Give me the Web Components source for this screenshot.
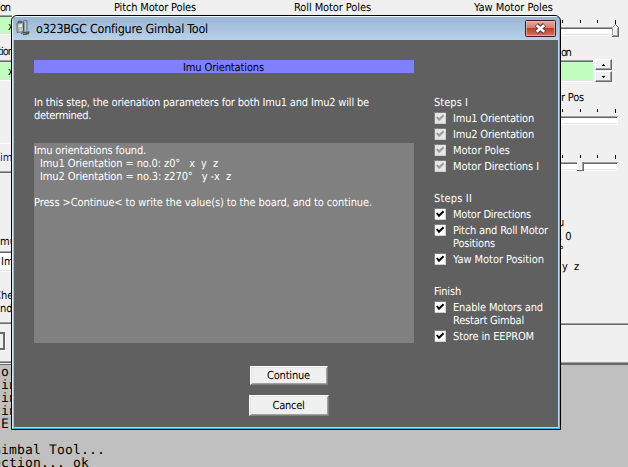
<!DOCTYPE html>
<html lang="en"><head><meta charset="utf-8"><title>o323BGC Configure Gimbal Tool</title>
<style>html,body{margin:0;padding:0;width:628px;height:467px;overflow:hidden;background:#f0f0f0}</style></head>
<body><gimbal-app></gimbal-app>
<script>
const define=(name,html,init)=>customElements.define(name,class extends HTMLElement{
  constructor(){super();const t=document.createElement('template');t.innerHTML=html;
    this.attachShadow({mode:'open'}).append(t.content.cloneNode(true));}
  connectedCallback(){if(init)init.call(this,this.shadowRoot);}
});

/* One line of text, tracked to the width in its w attribute. */
define('ui-text',`<style>:host{display:block;height:13px;line-height:13px;white-space:pre;overflow:visible}
span{display:inline-block;text-rendering:geometricPrecision}</style><span><slot></slot></span>`,function(r){
  const w=+this.getAttribute('w'),s=r.querySelector('span');if(!w)return;
  const n=this.textContent.length,cur=s.getBoundingClientRect().width;
  s.style.letterSpacing=((w-cur)/n)+'px';
});

define('check-item',`<style>:host{display:flex;gap:7px;padding-bottom:3px}
svg{width:12px;height:12px;flex:none}
:host([disabled]) .box{fill:#e6e6e6}:host([disabled]) .tick{stroke:#999}</style>
<svg viewBox="0 0 12 12" shape-rendering="crispEdges"><path fill="#fff" d="M0 0h12v12H0z"/><path fill="#808080" d="M0 0h12v1H1v11H0z"/><path class="box" fill="#fff" d="M1 1h10v10H1z"/><path fill="#d4d0c8" d="M11 1h1v11H1v-1h10z"/>
<path class="tick" shape-rendering="auto" d="M2.8 5l2.2 2.8 4.5-4.5" fill="none" stroke="#000" stroke-width="2"/></svg><div><slot></slot></div>`);

define('check-group',`<style>:host{display:block;margin-bottom:16px}header{height:16px}</style><header><slot name="title"></slot></header><slot></slot>`);

define('push-button',`<style>:host{display:flex;box-sizing:border-box;align-items:center;justify-content:center;background:#f0f0f0;color:#000;border:1px solid;border-color:#fff #808080 #808080 #fff;box-shadow:inset 1px 1px #e3e3e3,inset -1px -1px #a0a0a0}</style><slot></slot>`);

define('track-bar',`<style>:host{display:block;height:20px;width:67px}svg{display:block;overflow:visible}g{display:none}:host([thumb=end]) .end,:host([thumb=mid]) .mid{display:inline}</style>
<svg width="67" height="20" shape-rendering="crispEdges"><path fill="#000" d="M1 0h1v3H1zM19 0h1v3h-1zM36 0h1v3h-1zM54 0h1v4h-1z"/>
<path fill="#fff" d="M0 8h57v8H0z"/><path fill="#a0a0a0" d="M0 7h57v1H0z"/><path fill="#696969" d="M0 8h56v1H0z"/><path fill="#e3e3e3" d="M0 14h56v1H0z"/>
<g class="end"><path fill="#f0f0f0" d="M51 8l3-3 3 3v9h-6z"/><path fill="#fff" d="M51 8h1v8h-1z"/><path fill="#696969" d="M54 4h1v1h-1zM55 5h1v1h-1zM56 6h1v1h-1zM57 7h1v10h-7v-1h6z"/><path fill="#a0a0a0" d="M51 7h1v8h-1zM52 6h1v1h-1zM53 5h1v1h-1zM56 8h1v8h-1zM52 15h5v1h-5z"/></g>
<g class="mid"><path fill="#f0f0f0" d="M16 7l3-3 3 3v9h-6z"/><path fill="#fff" d="M16 7h1v8h-1zM17 6h1v1h-1z"/><path fill="#696969" d="M22 7h1v9h-7v-1h6z"/><path fill="#a0a0a0" d="M21 7h1v8h-1z"/></g></svg>`);

define('edit-field',`<style>:host{display:block;box-sizing:border-box;overflow:hidden;background:#c0ffc0;border-top:1px solid #a0a0a0;border-bottom:1px solid #fff;box-shadow:inset 0 1px #696969,inset 0 -1px #e3e3e3}</style><slot></slot>`);

define('spin-buttons',`<style>:host{display:grid;gap:1px;width:17px}div{height:11px;box-sizing:border-box;background:#f0f0f0;border:1px solid;border-color:#fff #696969 #696969 #fff;box-shadow:inset -1px -1px #a0a0a0;display:grid;place-items:center}svg{display:block}</style>
<div><svg width="3" height="2" shape-rendering="crispEdges"><path d="M1 0h1v1h1v1H0V1h1z"/></svg></div><div><svg width="3" height="2" shape-rendering="crispEdges"><path d="M0 0h3v1H2v1H1V1H0z"/></svg></div>`);

define('close-button',`<style>:host{display:block;width:31px;height:17px}svg{display:block}</style>
<svg width="31" height="17"><defs><linearGradient id="g" x2="0" y2="1"><stop stop-color="#e6aaa0"/><stop offset=".45" stop-color="#d28273"/><stop offset=".5" stop-color="#bb402c"/><stop offset="1" stop-color="#d37b64"/></linearGradient></defs>
<rect x=".5" y=".5" width="30" height="16" rx="1" fill="url(#g)" stroke="#431a25"/><rect x="1.5" y="1.5" width="28" height="14" fill="none" stroke="#f0bdb2" stroke-opacity=".7"/>
<path d="M11.4 4.8l8 7.4M19.4 4.8l-8 7.4" stroke="#593b43" stroke-width="4.6"/><path d="M11.6 5.2l7.6 6.6M19.2 5.2l-7.6 6.6" stroke="#fff" stroke-width="2.5" fill="none"/></svg>`);

define('tool-icon',`<style>:host{display:block;width:16px;height:17px}svg{display:block}</style>
<svg width="16" height="17"><path d="M7 5V2.5Q9 .2 11 2v11" fill="none" stroke="#6b777c" stroke-width="1.1"/><path d="M1.5 2.5l1.5-1 3 .5v2L2 4z" fill="#5b625d"/><path d="M1 4l7-.8v9.3l-7 1z" fill="#a3aba5" stroke="#5d6560" stroke-width=".8"/><path d="M2.5 5.5l3.5-.4v3l-3.5.4z" fill="#e2e8e3"/><path d="M3 10h4M3 11.8h3" stroke="#d9dfd9"/><path d="M7.5 4v8" stroke="#4b524e"/><path d="M5 14.5q3-1.5 5.5-1l3-.5M7 15.5l6-1" stroke="#4e5553" fill="none" stroke-width="1.3"/><path d="M9.5 4v8" stroke="#c4d0d7"/></svg>`);

define('gimbal-dialog',`<style>
:host{box-sizing:border-box;width:550px;height:415px;border:1px solid #000;border-radius:6px 6px 0 0;background:#606060;color:#fff;overflow:hidden;display:grid;grid-template-rows:24px 1fr}
.bar{display:flex;background:linear-gradient(#eaf4fc 0,#eaf4fc 1px,#99b4d1 1px,#a3bedb 8px,#b9d1ea);padding:3px 4px 0 3px;color:#000;border-left:1px solid #eef6fc;border-right:1px solid #35cbe2;gap:4px}
.bar ui-text{font-size:12.5px;flex:1;padding-top:3px}.bar close-button{margin-right:-1px;margin-top:1px}
.body{display:grid;grid-template-columns:380px 1fr;column-gap:20px;padding:20px 6px 0 21px;border-left:1px solid #d9ecf8;border-right:1px solid #35cbe2;border-bottom:1px solid #22bcd5;box-shadow:inset -1px -1px #b9d1ea,inset 1px 0 #a5bddb}
.banner{height:12px;padding-top:1px;background:#8080ff;color:#000;padding-left:149px}
.intro{margin-top:23px;height:47px}
.memo{height:200px;padding-top:1px;box-sizing:border-box;background:gray}.memo .in{padding-left:6px}
.buttons{display:flex;flex-direction:column;align-items:center;gap:10px;padding-top:23px;width:509px}
.steps{padding-top:36px}
push-button.a{width:78px;height:19px}push-button.b{width:80px;height:21px}
</style>
<div class="bar"><tool-icon></tool-icon><ui-text w="172">o323BGC Configure Gimbal Tool</ui-text><close-button></close-button></div>
<div class="body"><div class="left">
<div class="banner"><ui-text w="81">Imu Orientations</ui-text></div>
<div class="intro"><ui-text w="335">In this step, the orienation parameters for both Imu1 and Imu2 will be</ui-text><ui-text w="57">determined.</ui-text></div>
<div class="memo"><ui-text w="112">Imu orientations found.</ui-text>
<ui-text class="in" w="178">Imu1 Orientation = no.0: z0°   x  y  z</ui-text><ui-text class="in" w="191">Imu2 Orientation = no.3: z270°   y -x  z</ui-text><ui-text> </ui-text>
<ui-text w="338">Press &gt;Continue&lt; to write the value(s) to the board, and to continue.</ui-text></div>
<div class="buttons"><push-button class="a"><ui-text w="43">Continue</ui-text></push-button><push-button class="b"><ui-text w="32">Cancel</ui-text></push-button></div>
</div><div class="steps">
<check-group><ui-text slot="title" w="34">Steps I</ui-text>
<check-item disabled><ui-text w="81">Imu1 Orientation</ui-text></check-item><check-item disabled><ui-text w="81">Imu2 Orientation</ui-text></check-item><check-item disabled><ui-text w="57">Motor Poles</ui-text></check-item><check-item disabled><ui-text w="86">Motor Directions I</ui-text></check-item></check-group>
<check-group><ui-text slot="title" w="38">Steps II</ui-text>
<check-item><ui-text w="78">Motor Directions</ui-text></check-item><check-item><ui-text w="95">Pitch and Roll Motor</ui-text><ui-text w="42">Positions</ui-text></check-item><check-item><ui-text w="91">Yaw Motor Position</ui-text></check-item></check-group>
<check-group><ui-text slot="title" w="27">Finish</ui-text>
<check-item><ui-text w="90">Enable Motors and</ui-text><ui-text w="71">Restart Gimbal</ui-text></check-item><check-item><ui-text w="81">Store in EEPROM</ui-text></check-item></check-group>
</div></div>`);

define('gimbal-app',`<style>
:host{display:grid;position:relative;width:628px;height:467px;overflow:hidden;grid-template:15px 350px 102px/12px 1fr 67px;background:#f0f0f0;color:#000;font:11px "DejaVu Sans Condensed","DejaVu Sans",sans-serif}
.head{grid-column:1/4;display:grid;grid-template-columns:114px 180px 180px 1fr;padding-top:1px}
.side{display:flex;flex-direction:column;overflow:hidden}.right{grid-column:3}
.rule{height:2px;background:linear-gradient(#a0a0a0 50%,#696969 50%);flex:none}
.side>*{flex:none}
.console{grid-column:1/4;background:#c0c0c0;font:13px "DejaVu Sans Mono",monospace;border-top:1px solid #696969;box-sizing:border-box;margin-top:-1px;overflow:hidden}
.console ui-text{margin-left:-7px}
gimbal-dialog{position:absolute;left:11px;top:15px}
.row{display:flex;gap:2px}
</style>
<div class="head"><ui-text w="9.5">on</ui-text><ui-text w="82">Pitch Motor Poles</ui-text><ui-text w="77">Roll Motor Poles</ui-text><ui-text w="79">Yaw Motor Poles</ui-text></div>
<div class="side">
<edit-field style="height:20px"><ui-text style="margin:4px 0 0 8px">x</ui-text></edit-field>
<ui-text w="20" style="margin:10px 0 2px -7px">ation</ui-text>
<edit-field style="height:21px"><ui-text style="margin:4px 0 0 8px">x</ui-text></edit-field>
<div style="height:1px;background:#fff;margin-top:62px"></div>
<ui-text style="margin:7px 0 7px;color:#202080">imb</ui-text><div class="rule"></div>
<ui-text style="margin-top:62px">mu</ui-text>
<edit-field style="height:21px;background:#fff;margin-top:3px"><ui-text style="margin:3px 0 0 1px">Im</ui-text></edit-field>
<ui-text style="margin:17px 0 0 -6px">Che</ui-text><ui-text>nd</ui-text>
<div class="rule" style="margin-top:7px"></div>
<div style="height:18px;width:5px;margin-top:8px;box-sizing:border-box;border:2px solid #696969;border-left:0;box-shadow:1px 1px #fff"></div>
<div class="rule" style="margin-top:11px"></div>
</div>
<div class="side right">
<track-bar thumb="end" style="margin-top:5px"></track-bar>
<ui-text w="9" style="margin:6px 0 0 0">on</ui-text>
<div class="row"><edit-field style="width:32px;height:22px;margin-top:1px"></edit-field><spin-buttons></spin-buttons></div>
<ui-text w="23" style="margin:9px 0 5px">r Pos</ui-text>
<track-bar></track-bar><track-bar thumb="mid" style="margin-top:26px"></track-bar>
<ui-text style="margin:41px 0 0 -3px">u</ui-text><ui-text style="margin:1px 0 0 -2px">. 0</ui-text><ui-text style="margin:1px 0 0 -2px">°</ui-text><ui-text w="17" style="margin:3px 0 0 1px">y  z</ui-text>
<div class="rule" style="margin-top:50px"></div><div class="rule" style="margin-top:37px"></div>
</div>
<div class="console"><ui-text w="24"> or</ui-text><ui-text w="24"> in</ui-text><ui-text w="24"> in</ui-text><ui-text w="24"> in</ui-text><ui-text w="16"> E</ui-text><ui-text> </ui-text><ui-text w="112">Gimbal Tool...</ui-text><ui-text w="96">ection... ok</ui-text></div>
<gimbal-dialog></gimbal-dialog>`);
</script></body></html>
